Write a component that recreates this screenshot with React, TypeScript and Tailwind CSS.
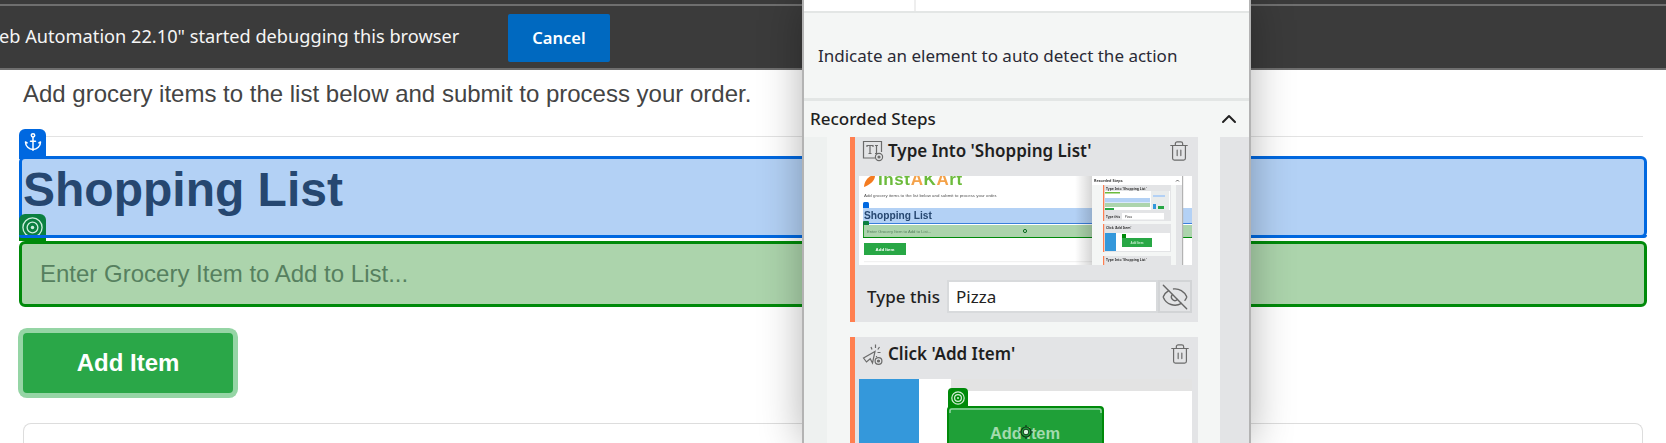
import { Anchor, ChevronUp, EyeOff, Trash2 } from "lucide-react";

const uiFont = "font-['Noto_Sans',sans-serif]";

const Rings = ({ className }: { className?: string }) => (
  <svg viewBox="0 0 24 24" fill="none" stroke="currentColor" className={className}>
    <circle cx="12" cy="12" r="10" strokeWidth="1.4" />
    <circle cx="12" cy="12" r="5.6" strokeWidth="1.4" />
    <circle cx="12" cy="12" r="1.8" fill="currentColor" stroke="none" />
  </svg>
);

const TypeIcon = () => (
  <svg viewBox="0 0 22 24" width="22" height="24" fill="none" stroke="#6b6b6b" strokeWidth="1.2">
    <path d="M13 19H1.5V2.5H19.5V13" />
    <path d="M5 8V6.5H11V8M8 6.5V14.5M6.5 14.5H9.5" />
    <path d="M13 6.5H16M14.5 6.5V14.5M13 14.5H16" />
    <circle cx="17" cy="18" r="3.6" />
    <circle cx="17" cy="18" r="1" fill="#6b6b6b" />
  </svg>
);

const ClickIcon = () => (
  <svg viewBox="0 0 22 24" width="22" height="24" fill="none" stroke="#6b6b6b" strokeWidth="1.2">
    <path d="M1.5 16L13 9.5L10.5 21L8.2 16.8L4.5 20Z" />
    <path d="M9 5L10 7.5M13.5 2.5V6M17.5 5L15.8 7.5M15.5 10.5H18.5M14.5 14V15" />
    <circle cx="16.5" cy="19" r="3.4" />
    <circle cx="16.5" cy="19" r="1" fill="#6b6b6b" />
  </svg>
);

// recording preview of the whole page, scaled down
const PagePreview = () => (
  <svg viewBox="0 0 333 89" width="333" height="89" className="block bg-white blur-[0.4px]">
    <defs>
      <linearGradient id="fade" x1="0" x2="1">
        <stop offset="0" stopColor="#000" stopOpacity="0" />
        <stop offset="1" stopColor="#000" stopOpacity="0.16" />
      </linearGradient>
    </defs>
    <path d="M5 11C5 6 9 1 12 0H16C16 5 10 9 5 11Z" fill="#f47b20" />
    <text x="19" y="9" fontFamily="Liberation Sans" fontWeight="700" fontSize="17" letterSpacing="0.6" fill="#6cbb3c">
      Inst<tspan fill="#f4a24a">A</tspan>K<tspan fill="#f4a24a">A</tspan>rt
    </text>
    <text x="5" y="21" fontFamily="Liberation Sans" fontSize="4.4" fill="#555">
      Add grocery items to the list below and submit to process your order.
    </text>
    <rect x="4" y="26" width="6" height="7" rx="1.5" fill="#0068e0" />
    <rect x="4" y="32" width="329" height="15" fill="#b3d1f5" />
    <rect x="4" y="47" width="329" height="1" fill="#3a7fdc" />
    <text x="5" y="42.5" fontFamily="Liberation Sans" fontWeight="700" fontSize="10.2" fill="#264770">
      Shopping List
    </text>
    <rect x="4" y="45" width="6" height="5" rx="1" fill="#0b8040" />
    <rect x="4" y="49" width="329" height="12" fill="#acd4ac" />
    <rect x="4" y="49" width="0.8" height="13" fill="#008a0a" />
    <rect x="4" y="61" width="329" height="1" fill="#008a0a" />
    <text x="8" y="57" fontFamily="Liberation Sans" fontSize="4.2" fill="#56805f">
      Enter Grocery Item to Add to List...
    </text>
    <circle cx="166" cy="55" r="1.6" fill="none" stroke="#0a6b20" strokeWidth="1" />
    <rect x="5" y="67" width="42" height="12" fill="#28a745" />
    <text x="26" y="74.8" textAnchor="middle" fontFamily="Liberation Sans" fontWeight="700" fontSize="4.4" fill="#fff">
      Add Item
    </text>
    <rect x="5" y="85.5" width="228" height="0.6" fill="#e3e3e3" />

    <rect x="216" y="0" width="17" height="89" fill="url(#fade)" />
    <rect x="233" y="0" width="90" height="89" fill="#f4f6f5" />
    <rect x="233" y="0" width="90" height="9" fill="#fff" />
    <text x="235" y="6" fontFamily="Noto Sans" fontWeight="600" fontSize="3.8" fill="#222">
      Recorded Steps
    </text>
    <path d="M317 5.5L318.5 4L320 5.5" stroke="#222" strokeWidth="0.7" fill="none" />
    <rect x="317" y="9" width="6" height="80" fill="#e3e4e6" />
    <rect x="323" y="0" width="1.2" height="89" fill="#b3b3b3" />

    <rect x="244" y="9" width="68" height="36" fill="#e3e4e6" />
    <rect x="244" y="9" width="1.2" height="36" fill="#ff7f50" />
    <text x="247" y="13.5" fontFamily="Noto Sans" fontWeight="600" fontSize="3.4" fill="#222">
      Type Into 'Shopping List'
    </text>
    <rect x="246" y="15" width="65" height="19" fill="#fff" />
    <rect x="246" y="22" width="45" height="4.5" fill="#b3d1f5" />
    <rect x="246" y="27" width="45" height="4" fill="#acd4ac" />
    <rect x="246" y="16" width="15" height="1.5" fill="#6cbb3c" />
    <rect x="246" y="32" width="9" height="2" fill="#28a745" />
    <rect x="292" y="15" width="18" height="19" fill="#e9ecec" />
    <rect x="294" y="19" width="12" height="2" fill="#b3d1f5" />
    <rect x="294" y="28" width="3" height="5" fill="#3498db" />
    <rect x="299" y="30" width="6" height="3" fill="#28a745" />
    <text x="247" y="41.5" fontFamily="Noto Sans" fontWeight="600" fontSize="3.2" fill="#222">
      Type this
    </text>
    <rect x="263" y="37" width="42" height="6.5" fill="#fff" />
    <text x="266" y="41.8" fontFamily="Noto Sans" fontSize="3" fill="#333">Pizza</text>

    <rect x="244" y="48" width="68" height="28" fill="#e3e4e6" />
    <rect x="244" y="48" width="1.2" height="28" fill="#ff7f50" />
    <text x="247" y="52.5" fontFamily="Noto Sans" fontWeight="600" fontSize="3.4" fill="#222">
      Click 'Add Item'
    </text>
    <rect x="246" y="57" width="65" height="18" fill="#fff" />
    <rect x="246" y="57" width="11" height="18" fill="#3498db" />
    <rect x="263" y="58" width="4" height="4" fill="#008a0a" />
    <rect x="263" y="62" width="30" height="9" fill="#28a745" />
    <text x="278" y="67.8" textAnchor="middle" fontFamily="Liberation Sans" fontWeight="700" fontSize="3" fill="#c7eccf">
      Add Item
    </text>

    <rect x="244" y="80" width="68" height="9" fill="#e3e4e6" />
    <rect x="244" y="80" width="1.2" height="9" fill="#ff7f50" />
    <text x="247" y="84.5" fontFamily="Noto Sans" fontWeight="600" fontSize="3.4" fill="#222">
      Type Into 'Shopping List'
    </text>
  </svg>
);

// close up of the clicked button, runs off the bottom of the window
const ButtonPreview = () => (
  <svg viewBox="0 0 333 64" width="333" height="64" className="block bg-white">
    <rect x="0" y="0" width="60" height="64" fill="#3498db" />
    <rect x="92" y="0" width="241" height="12" fill="#e3e3e3" />
    <path d="M89 28V13Q89 9 93 9H105Q109 9 109 13V28Z" fill="#008a0a" />
    <circle cx="99" cy="19" r="6.2" fill="none" stroke="#d5efd9" strokeWidth="1.2" />
    <circle cx="99" cy="19" r="3.4" fill="none" stroke="#d5efd9" strokeWidth="1.2" />
    <circle cx="99" cy="19" r="1" fill="#d5efd9" />
    <path d="M89 64V31Q89 28 92 28H241Q244 28 244 31V64" fill="#1fa038" stroke="#008a0a" strokeWidth="2" />
    <path d="M91 34V32Q91 30 93 30H240Q242 30 242 32V34" fill="none" stroke="#8fd39f" strokeWidth="1.6" />
    <text x="166" y="60" textAnchor="middle" fontFamily="Liberation Sans" fontWeight="700" fontSize="16.4" fill="#a3dbae">
      Add Item
    </text>
    <path d="M167 46V48M167 58V60M160 53H162M172 53H174" stroke="#0d3b18" strokeWidth="1.2" />
    <circle cx="167" cy="53" r="5" fill="#1fa038" stroke="#0d3b18" strokeWidth="1.2" />
    <circle cx="167" cy="53" r="2.8" fill="#d7f3dc" stroke="#0d3b18" strokeWidth="1" />
  </svg>
);

const StepTitle = ({ icon, title }: { icon: React.ReactNode; title: string }) => (
  <div className="flex items-center gap-[4px]">
    <span className="ml-[7px] flex w-[22px] justify-center">{icon}</span>
    <span className="flex-1 text-[17px] font-semibold leading-[24px] text-[#1f1f1f]">{title}</span>
    <Trash2 size={22} strokeWidth={1.3} className="mr-[7px] text-[#6b6b6b]" />
  </div>
);

const RecorderPanel = () => (
  <aside
    className={`absolute left-[802px] top-0 flex h-[443px] w-[449px] flex-col overflow-hidden border-x-2 border-[#b3b3b3] bg-[#f4f6f5] shadow-[0_0_40px_rgba(0,0,0,0.3)] ${uiFont}`}
  >
    <div className="h-[13px] border-b-2 border-[#e3e6e5] bg-white pl-[110px]">
      <div className="h-[11px] w-[2px] bg-[#eeeeee]" />
    </div>
    <div className="flex h-[85px] items-center pl-[14px] text-[17px] text-[#2a2a35]">
      Indicate an element to auto detect the action
    </div>
    <div className="flex h-[39px] items-center justify-between border-t-[3px] border-[#e3e6e5] pl-[6px] pr-[8px]">
      <span className="text-[17px] font-medium text-[#1f1f1f]">Recorded Steps</span>
      <ChevronUp size={24} strokeWidth={2} className="text-[#222222]" />
    </div>
    <div className="flex min-h-0 flex-1">
      <div className="w-[23px] bg-[#eef1f0]" />
      <div className="w-[23px]" />
      <div className="flex w-[348px] flex-col gap-[15px]">
        <section className="h-[185px] shrink-0 border-l-[5px] border-[#ff7f50] bg-[#e3e4e6] pr-[1px] pt-[2px]">
          <StepTitle icon={<TypeIcon />} title="Type Into 'Shopping List'" />
          <div className="ml-[4px] mt-[13px]">
            <PagePreview />
          </div>
          <div className="ml-[12px] mt-[15px] flex h-[33px] items-center">
            <span className="w-[80px] text-[17px] font-medium text-[#1f1f1f]">Type this</span>
            <div className="flex h-full w-[211px] items-center border-2 border-[#d8dadc] bg-white pl-[7px] text-[17px] text-[#222222]">
              Pizza
            </div>
            <div className="flex h-full w-[34px] items-center justify-center border-2 border-[#d2d4d6] bg-[#e3e4e6]">
              <EyeOff size={28} strokeWidth={1.2} className="text-[#666666]" />
            </div>
          </div>
        </section>
        <section className="shrink-0 border-l-[5px] border-[#ff7f50] bg-[#e3e4e6] pt-[5px]">
          <StepTitle icon={<ClickIcon />} title="Click 'Add Item'" />
          <div className="ml-[4px] mt-[13px]">
            <ButtonPreview />
          </div>
        </section>
      </div>
      <div className="w-[22px]" />
      <div className="flex-1 bg-[#e3e4e6]" />
    </div>
  </aside>
);

export default function App() {
  return (
    <div className="relative h-[443px] w-[1666px] overflow-hidden bg-white font-['Liberation_Sans',sans-serif]">
      <div className="bg-[#3b3b3b] pt-[4px]">
        <header className={`flex h-[66px] items-center border-y-2 border-t-[#6f6f6f] border-b-[#6f6f6f] ${uiFont}`}>
          <span className="-ml-px w-[509px] whitespace-nowrap text-[18.2px] text-[#f5f5f5]">
            eb Automation 22.10" started debugging this browser
          </span>
          <button className="mt-[2px] h-[48px] w-[102px] rounded-[2px] bg-[#0069c0] text-[16.5px] font-semibold text-white">
            Cancel
          </button>
        </header>
      </div>

      <main className="relative">
        <p className="ml-[23px] pt-[10px] text-[24px] leading-[28px] text-[#444444]">
          Add grocery items to the list below and submit to process your order.
        </p>
        <hr className="ml-[22px] mt-[28px] w-[1621px] border-t border-[#e3e3e3]" />

        <div className="relative ml-[19px] mt-[19px] w-[1628px]">
          <h1 className="flex h-[82px] items-center rounded-[6px] border-[3px] border-[#0068e0] bg-[#b3d1f5] pb-[15px] text-[48px] font-bold text-[#264770]">
            <span className="ml-[1px]">Shopping List</span>
          </h1>
          <div className="mt-[3px] flex h-[66px] items-center rounded-[6px] border-[3px] border-[#008a0a] bg-[#acd4ac] pl-[18px] text-[24px] text-[#56805f]">
            Enter Grocery Item to Add to List...
          </div>

          {/* element markers */}
          <div className="absolute left-0 top-[-27px] flex h-[30px] w-[27px] items-start justify-center rounded-t-[6px] bg-[#0068e0] pt-[3px] text-white">
            <Anchor size={20} strokeWidth={1.8} />
          </div>
          <div className="absolute left-0 top-[58px] flex h-[27px] w-[27px] items-start justify-center rounded-t-[6px] bg-[#0b8040] pt-[2px] text-[#cdeedd]">
            <Rings className="h-[23px] w-[23px]" />
          </div>
          <div className="absolute left-0 top-[79px] h-[3px] w-[1628px] rounded-b-[6px] bg-[#0068e0]" />
          <div className="absolute left-0 top-[82px] h-[3px] w-[27px] bg-[#008a0a]" />
        </div>

        <button className="ml-[23px] mt-[26px] block h-[60px] w-[210px] rounded-[4px] bg-[#2aa748] text-[24px] font-bold text-white ring-[5px] ring-[#95d5a5]">
          Add Item
        </button>

        <div className="ml-[23px] mt-[30px] h-[40px] w-[1620px] rounded-t-[8px] border border-b-0 border-[#dddddd]" />
      </main>

      <RecorderPanel />
    </div>
  );
}
